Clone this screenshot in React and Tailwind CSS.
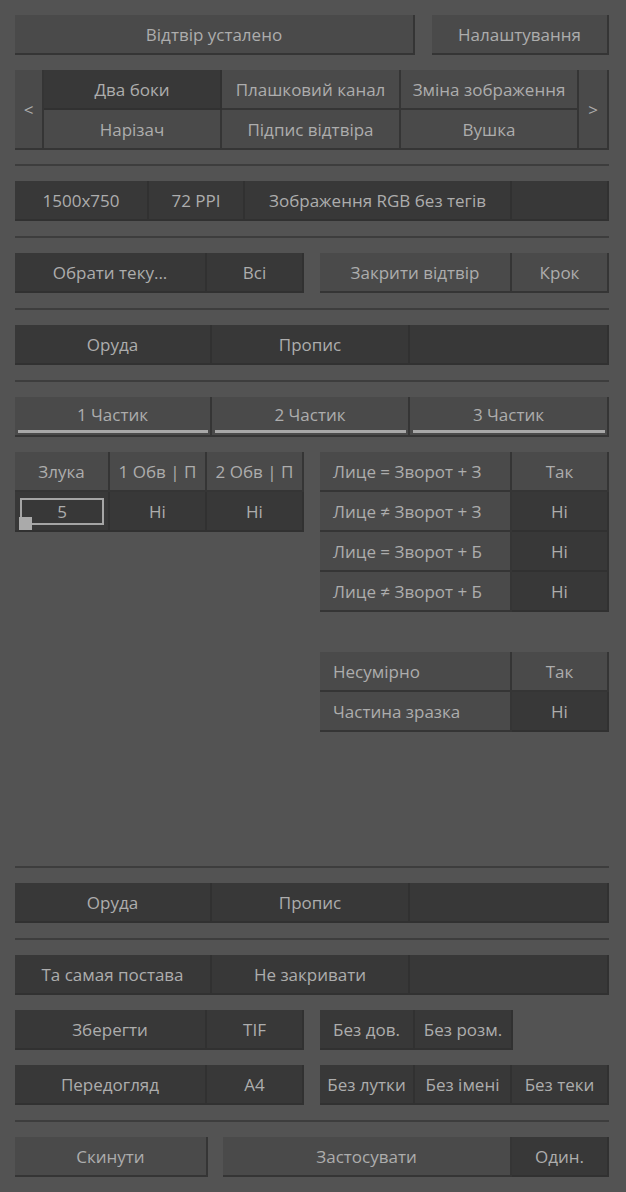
import React from "react";

const LIGHT = "bg-[#4a4a4a]";
const DARK = "bg-[#383838]";

function Cell({ w, dark, children, left, className = "" }) {
  return (
    <div
      className={`${dark ? DARK : LIGHT} h-[40px] flex items-center ${left ? "justify-start pl-[13px]" : "justify-center"} border-r-2 border-b-2 ${dark ? "border-[#313131]" : "border-[#353535]"} text-[#adadad] whitespace-nowrap overflow-hidden ${className}`}
      style={{ width: w }}
    >
      {children}
    </div>
  );
}

function Sep({ first }) {
  return <div className={`h-[2px] bg-[#3d3d3d] ${first ? "mt-[14px]" : "mt-[15px]"} mb-[15px]`} />;
}

function PartTab({ w, children }) {
  return (
    <div
      className={`${LIGHT} h-[40px] flex flex-col border-r-2 border-b-2 border-[#353535] text-[#adadad]`}
      style={{ width: w }}
    >
      <div className="flex-1 flex items-center justify-center pt-[2px]">{children}</div>
      <div className="h-[3px] ml-[3px] mr-[2px] mb-[2px] bg-[#a8a8a8]" />
    </div>
  );
}

export default function App() {
  return (
    <div
      className="w-[626px] h-[1192px] bg-[#535353] pl-[15px] pr-[17px] pt-[15px] text-[17px] leading-none"
      style={{ fontFamily: '"Open Sans", "Noto Sans", sans-serif' }}
    >
      {/* Row 1 */}
      <div className="flex gap-[17px]">
        <Cell w={400}>Відтвір усталено</Cell>
        <Cell w={177}>Налаштування</Cell>
      </div>

      {/* Tabs */}
      <div className="flex mt-[15px] h-[80px]">
        <div className={`${LIGHT} w-[29px] h-[80px] flex items-center justify-center border-r-2 border-b-2 border-[#353535] text-[#adadad]`}>
          &lt;
        </div>
        <div className="flex flex-col">
          <div className="flex">
            <Cell w={178} dark>Два боки</Cell>
            <Cell w={179}>Плашковий канал</Cell>
            <Cell w={178}>Зміна зображення</Cell>
          </div>
          <div className="flex">
            <Cell w={178}>Нарізач</Cell>
            <Cell w={179}>Підпис відтвіра</Cell>
            <Cell w={178}>Вушка</Cell>
          </div>
        </div>
        <div className={`${LIGHT} w-[30px] h-[80px] flex items-center justify-center border-r-2 border-b-2 border-[#353535] text-[#adadad]`}>
          &gt;
        </div>
      </div>

      <Sep first />

      {/* Info */}
      <div className="flex">
        <Cell w={134} dark>1500x750</Cell>
        <Cell w={96} dark>72 PPI</Cell>
        <Cell w={267} dark>Зображення RGB без тегів</Cell>
        <Cell w={97} dark></Cell>
      </div>

      <Sep />

      <div className="flex">
        <Cell w={192} dark>Обрати теку...</Cell>
        <Cell w={97} dark>Всі</Cell>
        <div className="w-[16px]" />
        <Cell w={192}>Закрити відтвір</Cell>
        <Cell w={97}>Крок</Cell>
      </div>

      <Sep />

      <div className="flex">
        <Cell w={197} dark>Оруда</Cell>
        <Cell w={198} dark>Пропис</Cell>
        <Cell w={199} dark></Cell>
      </div>

      <Sep />

      <div className="flex">
        <PartTab w={197}>1 Частик</PartTab>
        <PartTab w={198}>2 Частик</PartTab>
        <PartTab w={199}>3 Частик</PartTab>
      </div>

      {/* Middle */}
      <div className="flex gap-[16px] mt-[15px] h-[399px]">
        <div className="flex flex-col w-[289px]">
          <div className="flex">
            <Cell w={95}>Злука</Cell>
            <Cell w={97}>1 Обв | П</Cell>
            <Cell w={97}>2 Обв | П</Cell>
          </div>
          <div className="flex">
            <div className={`${DARK} relative w-[95px] h-[40px] border-r-2 border-b-2 border-[#313131]`}>
              <div className="absolute left-[5px] top-[6px] w-[84px] h-[27px] border-2 border-[#a5a5a5] flex items-center justify-center text-[#adadad]">
                5
              </div>
              <div className="absolute left-[4px] top-[25px] w-[13px] h-[13px] bg-[#aaaaaa]" />
            </div>
            <Cell w={97} dark>Ні</Cell>
            <Cell w={97} dark>Ні</Cell>
          </div>
        </div>
        <div className="flex flex-col w-[289px]">
          <div className="flex">
            <Cell w={192} left>Лице = Зворот + З</Cell>
            <Cell w={97}>Так</Cell>
          </div>
          <div className="flex">
            <Cell w={192} left>Лице ≠ Зворот + З</Cell>
            <Cell w={97} dark>Ні</Cell>
          </div>
          <div className="flex">
            <Cell w={192} left>Лице = Зворот + Б</Cell>
            <Cell w={97} dark>Ні</Cell>
          </div>
          <div className="flex">
            <Cell w={192} left>Лице ≠ Зворот + Б</Cell>
            <Cell w={97} dark>Ні</Cell>
          </div>
          <div className="flex mt-[40px]">
            <Cell w={192} left>Несумірно</Cell>
            <Cell w={97}>Так</Cell>
          </div>
          <div className="flex">
            <Cell w={192} left>Частина зразка</Cell>
            <Cell w={97} dark>Ні</Cell>
          </div>
        </div>
      </div>

      <Sep />

      <div className="flex">
        <Cell w={197} dark>Оруда</Cell>
        <Cell w={198} dark>Пропис</Cell>
        <Cell w={199} dark></Cell>
      </div>

      <Sep />

      <div className="flex">
        <Cell w={197} dark>Та самая постава</Cell>
        <Cell w={198} dark>Не закривати</Cell>
        <Cell w={199} dark></Cell>
      </div>

      <div className="flex mt-[15px]">
        <Cell w={192} dark>Зберегти</Cell>
        <Cell w={97} dark>TIF</Cell>
        <div className="w-[16px]" />
        <Cell w={95} dark>Без дов.</Cell>
        <Cell w={98} dark>Без розм.</Cell>
      </div>

      <div className="flex mt-[15px]">
        <Cell w={192} dark>Передогляд</Cell>
        <Cell w={97} dark>A4</Cell>
        <div className="w-[16px]" />
        <Cell w={95} dark>Без лутки</Cell>
        <Cell w={97} dark>Без імені</Cell>
        <Cell w={97} dark>Без теки</Cell>
      </div>

      <Sep />

      <div className="flex">
        <Cell w={193}>Скинути</Cell>
        <div className="w-[15px]" />
        <Cell w={289}>Застосувати</Cell>
        <Cell w={97} dark>Один.</Cell>
      </div>
    </div>
  );
}
